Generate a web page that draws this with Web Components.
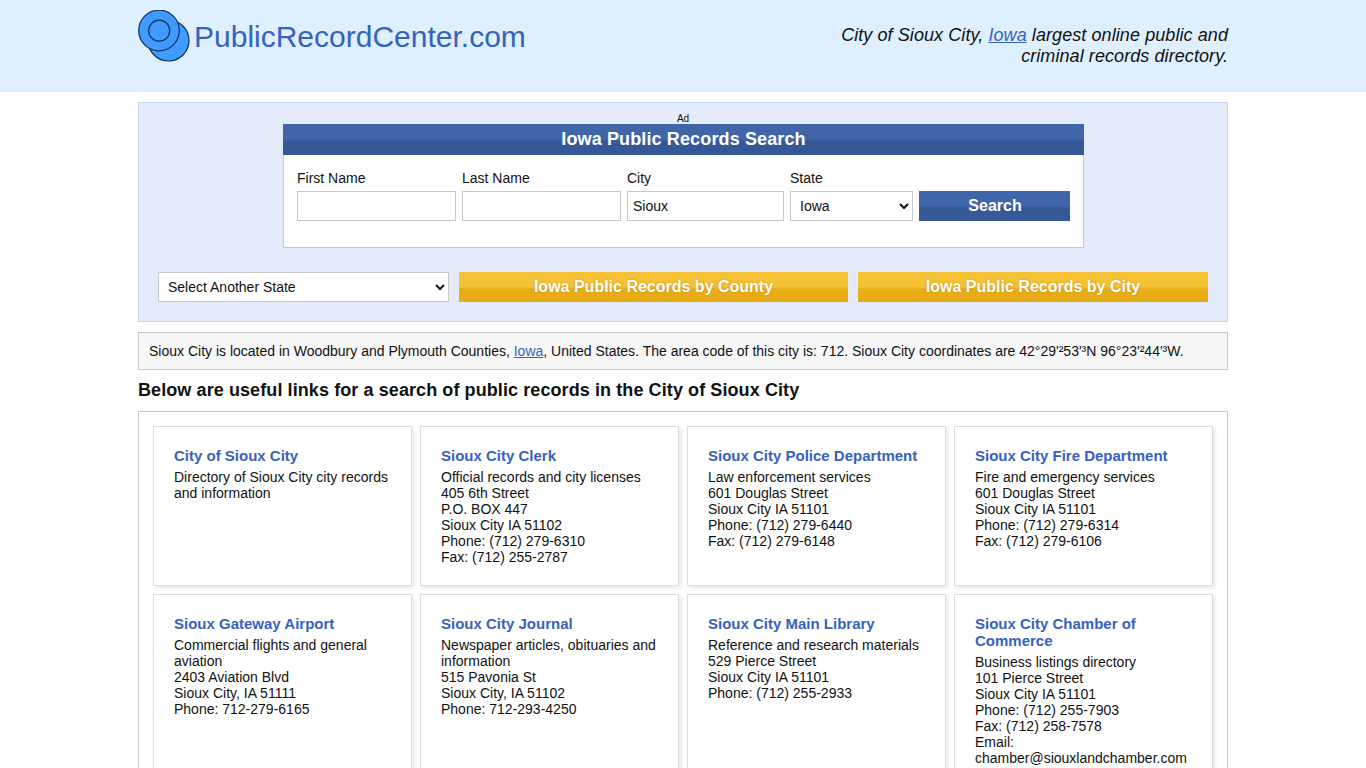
<!DOCTYPE html>
<html lang="en"><head><meta charset="utf-8"><title>Sioux City Public Records</title>
<style>
html,body{margin:0;padding:0;background:#fff;color:#111;font:14px/16px "Liberation Sans",Arial,sans-serif}
</style></head><body>
<site-header></site-header>
<page-wrap>
  <search-panel></search-panel>
  <info-bar>Sioux City is located in Woodbury and Plymouth Counties, <a href="#">Iowa</a>, United States. The area code of this city is: 712. Sioux City coordinates are 42°29'²53'³N 96°23'²44'³W.</info-bar>
  <section-title>Below are useful links for a search of public records in the City of Sioux City</section-title>
  <card-grid>
    <record-card heading="City of Sioux City">Directory of Sioux City city records and information</record-card>
    <record-card heading="Sioux City Clerk">Official records and city licenses<br>405 6th Street<br>P.O. BOX 447<br>Sioux City IA 51102<br>Phone: (712) 279-6310<br>Fax: (712) 255-2787</record-card>
    <record-card heading="Sioux City Police Department">Law enforcement services<br>601 Douglas Street<br>Sioux City IA 51101<br>Phone: (712) 279-6440<br>Fax: (712) 279-6148</record-card>
    <record-card heading="Sioux City Fire Department">Fire and emergency services<br>601 Douglas Street<br>Sioux City IA 51101<br>Phone: (712) 279-6314<br>Fax: (712) 279-6106</record-card>
    <record-card heading="Sioux Gateway Airport">Commercial flights and general aviation<br>2403 Aviation Blvd<br>Sioux City, IA 51111<br>Phone: 712-279-6165</record-card>
    <record-card heading="Sioux City Journal">Newspaper articles, obituaries and information<br>515 Pavonia St<br>Sioux City, IA 51102<br>Phone: 712-293-4250</record-card>
    <record-card heading="Sioux City Main Library">Reference and research materials<br>529 Pierce Street<br>Sioux City IA 51101<br>Phone: (712) 255-2933</record-card>
    <record-card heading="Sioux City Chamber of Commerce">Business listings directory<br>101 Pierce Street<br>Sioux City IA 51101<br>Phone: (712) 255-7903<br>Fax: (712) 258-7578<br>Email: chamber@siouxlandchamber.com</record-card>
  </card-grid>
</page-wrap>
<script>
function def(name, css, html){
  customElements.define(name, class extends HTMLElement{
    constructor(){super();const r=this.attachShadow({mode:"open"});r.innerHTML="<style>"+css+"</style>"+html;}
  });
}
const font='"Liberation Sans",Arial,sans-serif';
def("site-header",`
:host{display:block;background:#deefff;height:92px}
.in{width:1090px;margin:0 auto;display:flex;justify-content:space-between;align-items:flex-start}
.logo{display:flex;align-items:flex-start;color:#3662bd;font:30px/37px ${font};text-decoration:none;padding-top:10px}
.logo span{margin:8px 0 0 4px}
svg{display:block}
.tag{width:400px;text-align:right;font:italic 18px/21px ${font};letter-spacing:.08px;color:#111;padding-top:25px}
a{color:#3662bd}
`,`<div class="in"><a class="logo" href="#"><svg width="52" height="52" viewBox="0 0 52 52"><circle cx="30.5" cy="30.5" r="20.5" fill="#3f9bff" stroke="#12304f" stroke-width="1.2"/><circle cx="21" cy="20.5" r="20.3" fill="#3f9bff" stroke="#12304f" stroke-width="1.2"/><circle cx="21.2" cy="20.7" r="10.5" fill="none" stroke="#12304f" stroke-width="1.2"/></svg><span>PublicRecordCenter.com</span></a>
<div class="tag">City of Sioux City, <a href="#">Iowa</a> largest online public and criminal records directory.</div></div>`);
def("page-wrap",`:host{display:block;width:1090px;margin:10px auto 20px}`,`<slot></slot>`);
const blue='linear-gradient(#4066a9 0,#4066a9 48%,#375896 58%,#375896 100%)';
const gold='linear-gradient(#f5c235 0,#f5c235 48%,#e8ac17 58%,#e8ac17 100%)';
def("search-panel",`
:host{display:block;box-sizing:border-box;height:220px;background:#e4ecfc;border:1px solid #c6d7ec;padding-top:10px;font:14px/16px ${font};color:#111}
.ad{font-size:10px;line-height:11px;text-align:center;width:1088px}
.box{width:801px;margin:0 0 0 144px}
.hd{height:31px;background:${blue};color:#fff;font:bold 18px/30px ${font};letter-spacing:.13px;text-align:center}
.bd{box-sizing:border-box;height:93px;background:#fff;border:1px solid #c8c8c8;border-top:0;padding:15px 13px 0;display:flex;gap:6px;align-items:flex-start}
label{display:block}
label span{display:block;height:21px}
input,select{display:block;box-sizing:border-box;height:30px;border:1px solid #c8c8c8;background:#fff;color:#111;font:14px ${font};margin:0;border-radius:0;outline:0}
input{padding:0 5px}
select{padding:0 0 0 5px}
button{display:block;border:0;border-radius:0;padding:0;color:#fff;font:bold 16px ${font};cursor:pointer}
.go{width:151px;height:30px;background:${blue};margin-top:21px;padding:0 0 1px 1px}
.row{display:flex;gap:10px;margin:24px 0 0 19px;width:1050px}
.row select{width:291px;padding-left:5px}
.g{height:30px;background:${gold};text-shadow:0 0 2px rgba(150,100,0,.55);padding-bottom:1px}
`,`<div class="ad">Ad</div><div class="box"><div class="hd">Iowa Public Records Search</div><div class="bd">
<label><span>First Name</span><input style="width:159px"></label>
<label><span>Last Name</span><input style="width:159px"></label>
<label><span>City</span><input style="width:157px" value="Sioux"></label>
<label><span>State</span><select style="width:123px"><option>Iowa</option></select></label>
<button class="go">Search</button></div></div>
<div class="row"><select><option>Select Another State</option></select><button class="g" style="width:389px">Iowa Public Records by County</button><button class="g" style="width:350px">Iowa Public Records by City</button></div>`);
def("info-bar",`
:host{display:block;box-sizing:border-box;height:38px;margin-top:10px;background:#f7f7f7;border:1px solid #c8c8c8;padding:10px;font:14px/16px ${font};color:#111}
::slotted(a){color:#3662bd}
`,`<slot></slot>`);
def("section-title",`:host{display:block;font:bold 18px/21px ${font};letter-spacing:.09px;color:#111;padding:10px 0;margin:0}`,`<slot></slot>`);
def("card-grid",`:host{display:grid;grid-template-columns:repeat(4,259px);gap:8px;border:1px solid #c8c8c8;padding:14px}`,`<slot></slot>`);
customElements.define("record-card",class extends HTMLElement{
  constructor(){super();const r=this.attachShadow({mode:"open"});
  r.innerHTML=`<style>
:host{display:block;box-sizing:border-box;min-height:160px;background:#fff;border:1px solid #ddd;box-shadow:2px 2px 4px rgba(0,0,0,.1);padding:20px;font:14px/16px ${font};color:#111}
h3{margin:0 0 5px;font:bold 15px/17px ${font};color:#3662bd}
</style><h3>${this.getAttribute("heading")}</h3><slot></slot>`;}
});
</script>
</body></html>
